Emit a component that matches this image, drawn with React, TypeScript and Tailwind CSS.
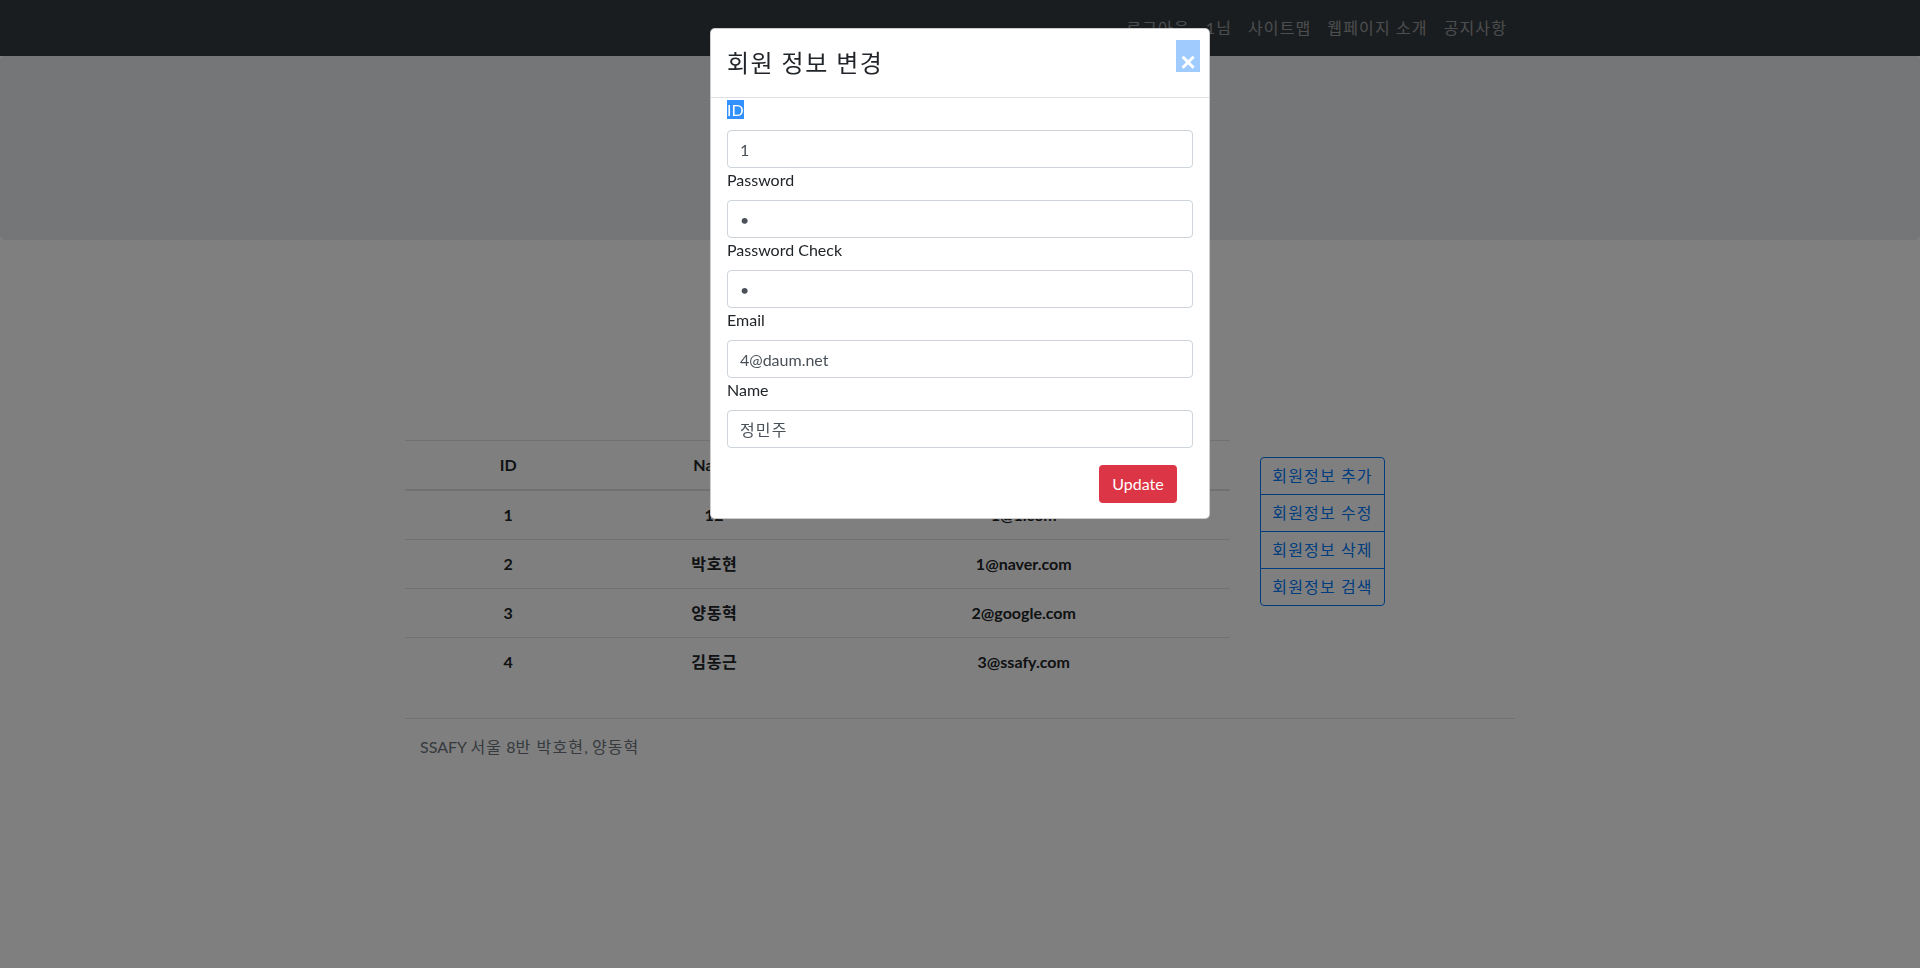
import React from 'react';

const members = [
  { id: 1, name: '12', email: '1@1.com' },
  { id: 2, name: '박호현', email: '1@naver.com' },
  { id: 3, name: '양동혁', email: '2@google.com' },
  { id: 4, name: '김동근', email: '3@ssafy.com' },
];

const navLinks = ['로그아웃', '1님', '사이트맵', '웹페이지 소개', '공지사항'];
const actions = ['회원정보 추가', '회원정보 수정', '회원정보 삭제', '회원정보 검색'];

const font = { fontFamily: 'Lato, "Noto Sans CJK KR", sans-serif' };

const Field: React.FC<{ label: React.ReactNode; value: string; type?: string; ko?: boolean }> = ({ label, value, type = 'text', ko }) => (
  <div>
    <label className="block leading-6 mb-2 text-[#212529]">{label}</label>
    <input
      type={type}
      readOnly
      defaultValue={value}
      className={
        'block w-full h-[38px] px-3 border border-[#ced4da] rounded text-[#495057] bg-white outline-none' +
        (ko ? ' tracking-[0.07em]' : '')
      }
    />
  </div>
);

export default function App() {
  return (
    <div className="relative min-h-screen bg-white text-[#212529] text-base" style={font}>
      {/* navbar */}
      <nav className="bg-[#343a40] h-14">
        <div className="max-w-[1140px] mx-auto px-[15px] h-full flex items-center justify-end">
          {navLinks.map((l) => (
            <a key={l} className="px-2 text-white/50 leading-6 tracking-[0.07em]">{l}</a>
          ))}
        </div>
      </nav>

      {/* jumbotron */}
      <div className="bg-[#e9ecef] h-[184px] rounded-[5px]"></div>

      {/* content */}
      <div className="max-w-[1140px] mx-auto px-[15px] mt-[200px]">
        <div className="flex -mx-[15px]">
          <div className="w-9/12 px-[15px]">
            <table className="w-full border-collapse text-center font-bold">
              <thead>
                <tr>
                  <th className="w-1/4 py-3 leading-6 border-t border-b-2 border-[#dee2e6]">ID</th>
                  <th className="w-1/4 py-3 leading-6 border-t border-b-2 border-[#dee2e6]">Name</th>
                  <th className="w-1/2 py-3 leading-6 border-t border-b-2 border-[#dee2e6]">Email</th>
                </tr>
              </thead>
              <tbody>
                {members.map((m) => (
                  <tr key={m.id}>
                    <td className="py-3 leading-6 border-t border-[#dee2e6]">{m.id}</td>
                    <td className="py-3 leading-6 border-t border-[#dee2e6] tracking-[0.04em]">{m.name}</td>
                    <td className="py-3 leading-6 border-t border-[#dee2e6]">{m.email}</td>
                  </tr>
                ))}
              </tbody>
            </table>
          </div>
          <div className="w-3/12 px-[15px]">
            <div className="mt-[17px] flex flex-col w-[125px]">
              {actions.map((a, i) => (
                <button
                  key={a}
                  className={
                    'h-[38px] border border-[#007bff] text-[#007bff] leading-6 tracking-[0.07em] ' +
                    (i === 0 ? 'rounded-t ' : '-mt-px ') +
                    (i === actions.length - 1 ? 'rounded-b' : '')
                  }
                >
                  {a}
                </button>
              ))}
            </div>
          </div>
        </div>

        <footer className="mt-[32px]">
          <hr className="border-t border-black/10" />
          <p className="mt-4 pl-[15px] leading-6 text-[#6c757d]">
            SSAFY <span className="tracking-[0.07em]">서울</span> 8<span className="tracking-[0.07em]">반 박호현</span>, <span className="tracking-[0.07em]">양동혁</span>
          </p>
        </footer>
      </div>

      {/* backdrop */}
      <div className="fixed inset-0 bg-black/50 z-10"></div>

      {/* modal */}
      <div className="fixed inset-0 z-20 flex justify-center pt-7">
        <div className="w-[500px] self-start bg-white border border-black/20 rounded-[5px]">
          <div className="flex items-start justify-between pl-4 pr-[9px] pt-4 pb-4 border-b border-[#dee2e6]">
            <h4 className="text-2xl leading-9 font-normal tracking-[0.06em]">회원 정보 변경</h4>
            <span
              className="-mt-[5px] w-6 h-8 bg-[#9fcbff] flex items-start justify-center pt-[9px] text-white text-[26px] font-bold leading-none"
              style={{ fontFamily: '"Liberation Sans", sans-serif' }}
            >
              ×
            </span>
          </div>
          <div className="px-4">
            <Field label={<span className="bg-[#3390ff] text-white">ID</span>} value="1" />
            <Field label="Password" value="1" type="password" />
            <Field label="Password Check" value="1" type="password" />
            <Field label="Email" value="4@daum.net" />
            <Field label="Name" value="정민주" ko />
            <div className="flex justify-end pr-4 mt-[17px] mb-[15px]">
              <button className="w-[78px] h-[38px] rounded bg-[#dc3545] text-white leading-6">Update</button>
            </div>
          </div>
        </div>
      </div>
    </div>
  );
}
